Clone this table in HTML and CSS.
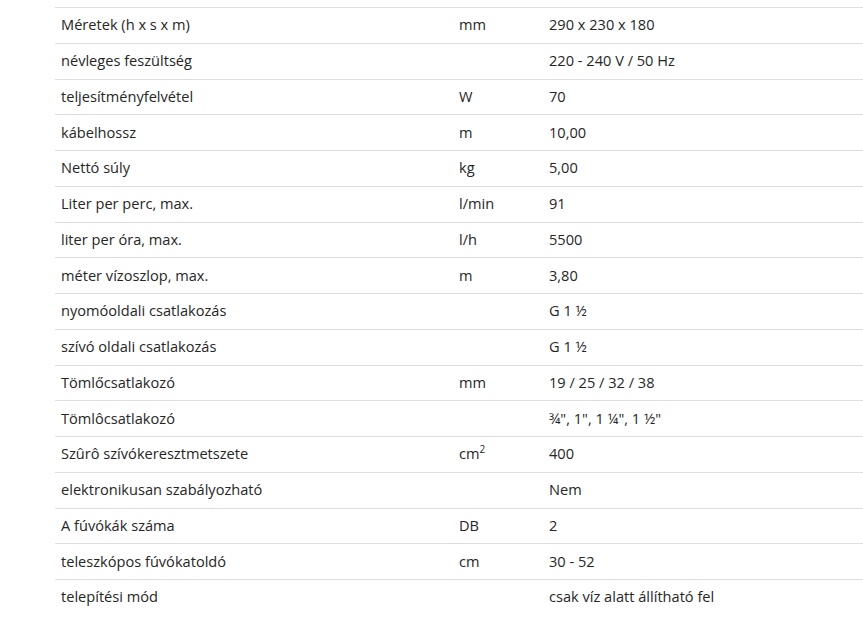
FILE: index.html
```html
<!DOCTYPE html>
<html lang="hu">
<head>
<meta charset="utf-8">
<title>Műszaki adatok</title>
<link rel="stylesheet" href="styles.css">
</head>
<body>
<table class="specs">
<tbody>
<tr><td class="label">Méretek (h x s x m)</td><td class="unit">mm</td><td class="value">290 x 230 x 180</td></tr>
<tr><td class="label">névleges feszültség</td><td class="unit"></td><td class="value">220 - 240 V / 50 Hz</td></tr>
<tr><td class="label">teljesítményfelvétel</td><td class="unit">W</td><td class="value">70</td></tr>
<tr><td class="label">kábelhossz</td><td class="unit">m</td><td class="value">10,00</td></tr>
<tr><td class="label">Nettó súly</td><td class="unit">kg</td><td class="value">5,00</td></tr>
<tr><td class="label">Liter per perc, max.</td><td class="unit">l/min</td><td class="value">91</td></tr>
<tr><td class="label">liter per óra, max.</td><td class="unit">l/h</td><td class="value">5500</td></tr>
<tr><td class="label">méter vízoszlop, max.</td><td class="unit">m</td><td class="value">3,80</td></tr>
<tr><td class="label">nyomóoldali csatlakozás</td><td class="unit"></td><td class="value">G 1 ½</td></tr>
<tr><td class="label">szívó oldali csatlakozás</td><td class="unit"></td><td class="value">G 1 ½</td></tr>
<tr><td class="label">Tömlőcsatlakozó</td><td class="unit">mm</td><td class="value">19 / 25 / 32 / 38</td></tr>
<tr><td class="label">Tömlôcsatlakozó</td><td class="unit"></td><td class="value">¾", 1", 1 ¼", 1 ½"</td></tr>
<tr><td class="label">Szûrô szívókeresztmetszete</td><td class="unit">cm<sup>2</sup></td><td class="value">400</td></tr>
<tr><td class="label">elektronikusan szabályozható</td><td class="unit"></td><td class="value">Nem</td></tr>
<tr><td class="label">A fúvókák száma</td><td class="unit">DB</td><td class="value">2</td></tr>
<tr><td class="label">teleszkópos fúvókatoldó</td><td class="unit">cm</td><td class="value">30 - 52</td></tr>
<tr class="last"><td class="label">telepítési mód</td><td class="unit"></td><td class="value">csak víz alatt állítható fel</td></tr>
</tbody>
</table>
</body>
</html>
```
FILE: styles.css
```css
html, body {
  margin: 0;
  padding: 0;
  background: #fff;
}
body {
  padding: 7px 0 0 55px;
  font-family: "Open Sans", "Noto Sans", sans-serif;
  font-size: 14.6px;
  color: #262626;
}
.specs {
  border-collapse: collapse;
  width: 808px;
}
.specs td {
  border-top: 1px solid #dedede;
  height: 32.75px;
  padding: 0 0 2px 6px;
  line-height: 20px;
  vertical-align: middle;
  white-space: nowrap;
}
.specs .label { width: 392px; }
.specs .unit { width: 84px; }
.specs sup {
  font-size: 10px;
  line-height: 0;
  vertical-align: 6px;
}
```
